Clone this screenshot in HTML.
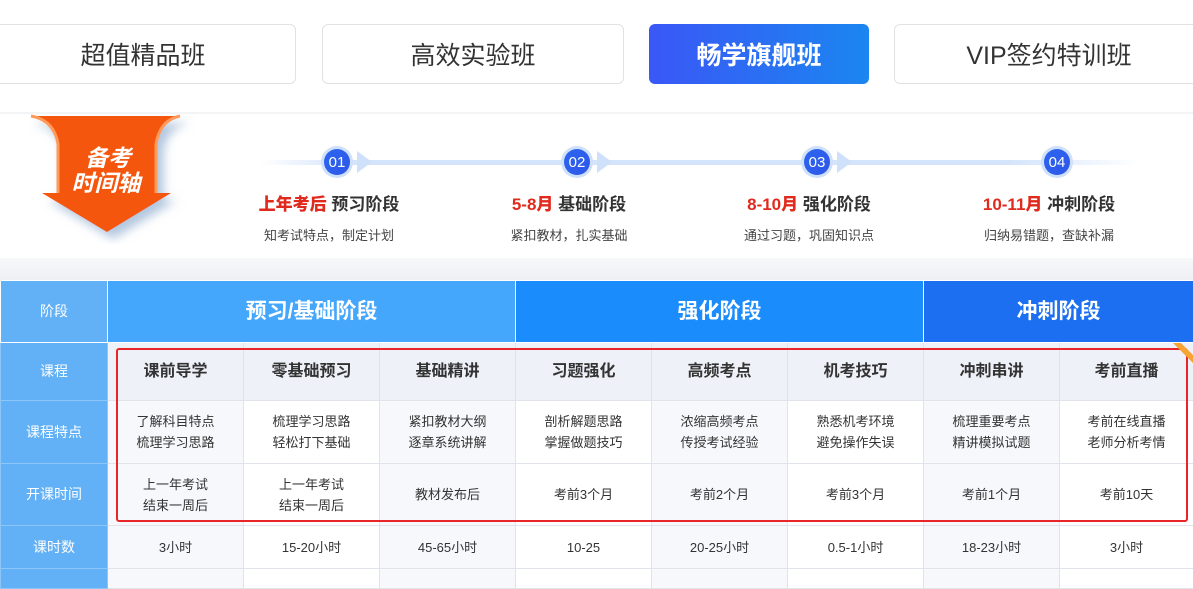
<!DOCTYPE html>
<html><head><meta charset="utf-8"><style>
*{margin:0;padding:0;box-sizing:border-box}
body{width:1193px;height:571px;overflow:hidden;background:#fff;font-family:"Liberation Sans","Noto Sans CJK SC",sans-serif;position:relative}
.tab{position:absolute;top:24px;height:60px;border:1px solid #e2e2e2;border-radius:6px;font-size:25px;color:#333;display:flex;align-items:center;justify-content:center;background:#fff}
.tab.on{background:linear-gradient(90deg,#3a57f6,#1b86f0);border:none;color:#fff;font-weight:bold}
.sep{position:absolute;left:0;top:112px;width:1193px;height:2px;background:#f3f4f6}
.band{position:absolute;left:0;top:258px;width:1193px;height:22px;background:linear-gradient(#f7f8fa,#eef0f4)}
.line{position:absolute;top:160px;height:5px;background:#d4e4fb}
.dot{position:absolute;top:146px;width:32px;height:32px;border-radius:50%;background:#cfe0fb;}
.dot span{position:absolute;left:3px;top:3px;width:26px;height:26px;border-radius:50%;background:linear-gradient(135deg,#2b67f0,#2f55e8);color:#fff;font-size:15px;display:flex;align-items:center;justify-content:center}
.tri{position:absolute;top:151px;width:0;height:0;border-top:11px solid transparent;border-bottom:11px solid transparent;border-left:15px solid #cfe0fb}
.st{position:absolute;top:190px;width:240px;text-align:center;font-size:17px;font-weight:bold;color:#333}
.st b{color:#e12a1e}
.ss{position:absolute;top:225px;width:240px;text-align:center;font-size:13px;color:#444}
table{position:absolute;left:0;top:280px;border-collapse:collapse;table-layout:fixed;width:1193px}
td{border:1px solid #e0e3ea;text-align:center;font-size:13px;color:#333;line-height:21px;background:#f7f8fb}
td.l{background:#62b0f6;color:#fff;border-color:#8cc6f8;font-size:14px}
tr.h td{height:62px;color:#fff;font-size:21px;font-weight:bold;border-color:#fff}
tr.c td{height:58px;font-size:16px;font-weight:bold;background:#eef1f8;color:#333}
tr.f td{height:63px}
tr.t td{height:62px}
tr.n td{height:43px}
td.w{background:#fff}
.red{position:absolute;left:116px;top:348px;width:1072px;height:174px;border:2px solid #e8262a;border-radius:3px}
</style></head><body>
<div class="tab" style="left:-10px;width:306px">超值精品班</div>
<div class="tab" style="left:322px;width:302px">高效实验班</div>
<div class="tab on" style="left:649px;width:220px">畅学旗舰班</div>
<div class="tab" style="left:894px;width:310px">VIP签约特训班</div>
<div class="sep"></div>
<svg style="position:absolute;left:28px;top:114px" width="170" height="130" viewBox="0 0 170 130">
<defs><filter id="s"><feDropShadow dx="6" dy="7" stdDeviation="5" flood-color="#7fa0c8" flood-opacity=".6"/></filter></defs>
<g filter="url(#s)">
<path d="M3 2 H152 Q132 6 128 30 V79 H143 L79 118 L14 79 H30 V30 Q26 6 3 2Z" fill="#f5560c"/>
<path d="M3 2 Q26 6 30 30 V79" fill="none" stroke="#ff9a5a" stroke-width="3"/>
<path d="M152 2 Q132 6 128 30 V79" fill="none" stroke="#ff9a5a" stroke-width="3"/>
</g>
<text x="80" y="52" text-anchor="middle" font-size="23" font-weight="bold" font-style="italic" fill="#fff" font-family="Noto Sans CJK SC">备考</text>
<text x="78" y="77" text-anchor="middle" font-size="23" font-weight="bold" font-style="italic" fill="#fff" font-family="Noto Sans CJK SC">时间轴</text>
</svg>
<div class="line" style="left:260px;width:880px;background:linear-gradient(90deg,#fff,#d4e4fb 10%,#d4e4fb 85%,#fff)"></div>
<div class="dot" style="left:321px"><span>01</span></div><div class="tri" style="left:357px"></div>
<div class="dot" style="left:561px"><span>02</span></div><div class="tri" style="left:597px"></div>
<div class="dot" style="left:801px"><span>03</span></div><div class="tri" style="left:837px"></div>
<div class="dot" style="left:1041px"><span>04</span></div>
<div class="st" style="left:209px"><b>上年考后</b> 预习阶段</div><div class="ss" style="left:209px">知考试特点，制定计划</div>
<div class="st" style="left:449px"><b>5-8月</b> 基础阶段</div><div class="ss" style="left:449px">紧扣教材，扎实基础</div>
<div class="st" style="left:689px"><b>8-10月</b> 强化阶段</div><div class="ss" style="left:689px">通过习题，巩固知识点</div>
<div class="st" style="left:929px"><b>10-11月</b> 冲刺阶段</div><div class="ss" style="left:929px">归纳易错题，查缺补漏</div>
<div class="band"></div>
<table>
<colgroup><col style="width:107px"><col style="width:136px"><col style="width:136px"><col style="width:136px"><col style="width:136px"><col style="width:136px"><col style="width:136px"><col style="width:136px"><col style="width:134px"></colgroup>
<tr class="h"><td class="l" style="font-size:14px;font-weight:normal">阶段</td><td colspan="3" style="background:#45a7fb">预习/基础阶段</td><td colspan="3" style="background:#1a8cfb">强化阶段</td><td colspan="2" style="background:#1b6ff0">冲刺阶段</td></tr>
<tr class="c"><td class="l" style="font-size:14px;font-weight:normal;color:#fff;background:#62b0f6">课程</td><td>课前导学</td><td>零基础预习</td><td>基础精讲</td><td>习题强化</td><td>高频考点</td><td>机考技巧</td><td>冲刺串讲</td><td>考前直播</td></tr>
<tr class="f"><td class="l">课程特点</td><td>了解科目特点<br>梳理学习思路</td><td class="w">梳理学习思路<br>轻松打下基础</td><td>紧扣教材大纲<br>逐章系统讲解</td><td class="w">剖析解题思路<br>掌握做题技巧</td><td>浓缩高频考点<br>传授考试经验</td><td class="w">熟悉机考环境<br>避免操作失误</td><td>梳理重要考点<br>精讲模拟试题</td><td class="w">考前在线直播<br>老师分析考情</td></tr>
<tr class="t"><td class="l">开课时间</td><td>上一年考试<br>结束一周后</td><td class="w">上一年考试<br>结束一周后</td><td>教材发布后</td><td class="w">考前3个月</td><td>考前2个月</td><td class="w">考前3个月</td><td>考前1个月</td><td class="w">考前10天</td></tr>
<tr class="n"><td class="l">课时数</td><td>3小时</td><td class="w">15-20小时</td><td>45-65小时</td><td class="w">10-25</td><td>20-25小时</td><td class="w">0.5-1小时</td><td>18-23小时</td><td class="w">3小时</td></tr>
<tr><td class="l" style="height:20px"></td><td></td><td class="w"></td><td></td><td class="w"></td><td></td><td class="w"></td><td></td><td class="w"></td></tr>
</table>
<div class="red"></div>
<svg style="position:absolute;left:1165px;top:343px" width="28" height="28"><polygon points="8,0 16,0 28,12 28,20" fill="#f7a335"/></svg>
</body></html>
